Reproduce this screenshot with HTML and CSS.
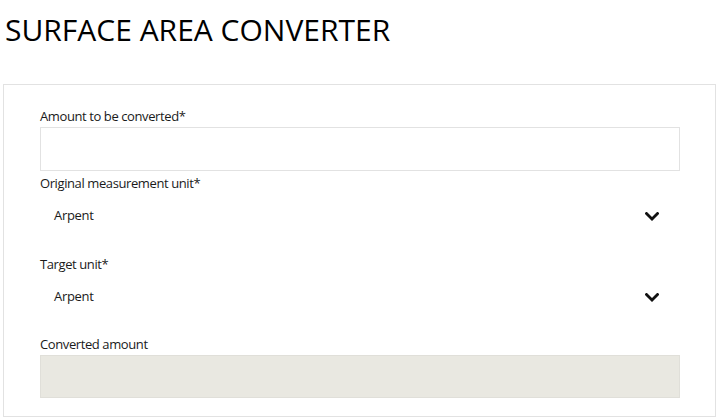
FILE: index.html
```html
<!DOCTYPE html>
<html lang="en">
<head>
  <meta charset="UTF-8">
  <meta name="viewport" content="width=device-width, initial-scale=1.0">
  <title>Surface Area Converter</title>
  <link rel="stylesheet" href="styles.css">
</head>
<body>
  <div class="page">
    <h1 class="title">SURFACE AREA CONVERTER</h1>
    <form class="converter">
      <div class="field">
        <label for="amount">Amount to be converted*</label>
        <input type="text" id="amount" class="text-input">
      </div>
      <div class="field field-select">
        <label for="from-unit">Original measurement unit*</label>
        <div class="select">
          <span class="select-value">Arpent</span>
          <svg class="chevron" width="14" height="9" viewBox="0 0 14 9">
            <polyline points="1.5,1.5 7,7 12.5,1.5" />
          </svg>
        </div>
      </div>
      <div class="field field-select">
        <label for="to-unit">Target unit*</label>
        <div class="select">
          <span class="select-value">Arpent</span>
          <svg class="chevron" width="14" height="9" viewBox="0 0 14 9">
            <polyline points="1.5,1.5 7,7 12.5,1.5" />
          </svg>
        </div>
      </div>
      <div class="field">
        <label>Converted amount</label>
        <div class="result"></div>
      </div>
    </form>
  </div>
</body>
</html>
```

FILE: styles.css
```css
body {
  margin: 0;
  font-family: "Open Sans", "Noto Sans", sans-serif;
  color: #1a1a1a;
  background: #fff;
}
.page {
  padding: 0 3px;
}
.title {
  margin: 12px 0 36px 2px;
  font-size: 30px;
  line-height: 36px;
  font-weight: 400;
  color: #000;
  letter-spacing: 0;
}
.converter {
  border: 1px solid #e2e2e2;
  padding: 23px 35px 18px 36px;
}
.field {
  display: flex;
  flex-direction: column;
  margin-bottom: 4px;
}
.field-select {
  margin-bottom: 18px;
}
.field-select + .field:last-child {
  margin-top: -1px;
}
.field:last-child {
  margin-bottom: 0;
}
label {
  font-size: 13px;
  line-height: 16px;
  margin-bottom: 3px;
  color: #1a1a1a;
  letter-spacing: -0.4px;
}
.text-input {
  box-sizing: border-box;
  height: 44px;
  border: 1px solid #e2e2e2;
  margin: 0;
  padding: 0 14px;
  font: inherit;
}
.select {
  display: flex;
  align-items: center;
  justify-content: space-between;
  height: 44px;
  padding: 0 21px 0 14px;
  font-size: 13px;
  letter-spacing: -0.3px;
}
.select-value {
  margin-top: -2px;
}
.chevron polyline {
  fill: none;
  stroke: #111;
  stroke-width: 2.8;
  stroke-linecap: square;
}
.result {
  box-sizing: border-box;
  height: 43px;
  background: #e9e8e1;
  border: 1px solid #e0dfd9;
}
```
